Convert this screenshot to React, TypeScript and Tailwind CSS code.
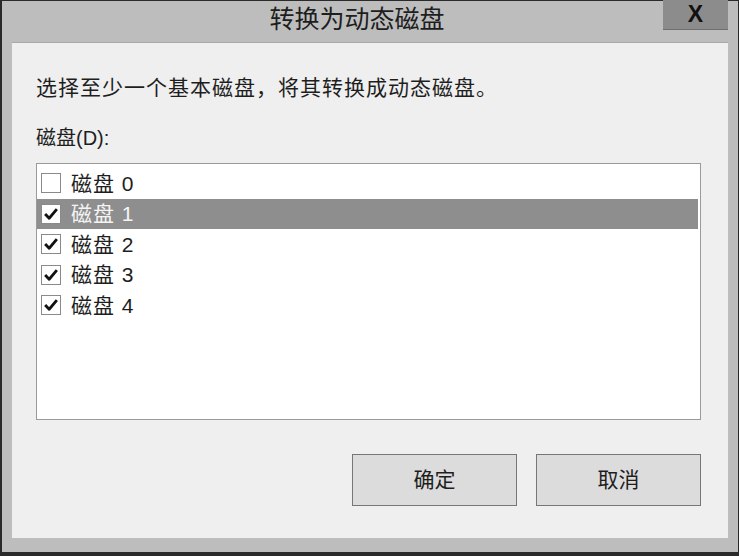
import React from "react";

const disks = [
  { name: "磁盘 0", checked: false },
  { name: "磁盘 1", checked: true },
  { name: "磁盘 2", checked: true },
  { name: "磁盘 3", checked: true },
  { name: "磁盘 4", checked: true },
];

function Check({ checked }: { checked: boolean }) {
  return (
    <div className="w-[20px] h-[20px] border border-[#8a8a8a] bg-white flex items-center justify-center shrink-0">
      {checked && (
        <svg width="16" height="16" viewBox="0 0 15 15">
          <path d="M2 7.5 L5.8 11.5 L13 3" fill="none" stroke="#111" strokeWidth="2.6" strokeLinejoin="round" />
        </svg>
      )}
    </div>
  );
}

export default function App() {
  return (
    <div
      className="w-[739px] h-[556px] bg-[#2a2a2a] pl-[2px] pr-[1px] pt-[1px] pb-[4px]"
      style={{ fontFamily: '"Liberation Sans", "Noto Sans CJK SC", sans-serif' }}
    >
      <div className="w-full h-full bg-[#bdbdbd] flex flex-col px-[10px] pb-[14px]">
        {/* title bar */}
        <div className="relative h-[41px] flex items-center justify-center shrink-0 pr-[26px]">
          <span className="text-[25px] text-[#1e1e1e] -mt-[4px]">转换为动态磁盘</span>
          <div className="absolute right-[0px] top-[-1px] w-[65px] h-[30px] bg-[#8c8c8c] border-b border-[#6e6e6e] flex items-center justify-center">
            <span className="text-[23px] font-bold text-[#111]">X</span>
          </div>
        </div>
        {/* client */}
        <div className="flex-1 bg-[#efefef] border-t border-[#a8a8a8] pl-[24px] pr-[27px] flex flex-col">
          <div className="text-[21px] text-[#1e1e1e] mt-[31px] leading-[28px] tracking-[1px]">
            选择至少一个基本磁盘，将其转换成动态磁盘。
          </div>
          <div className="text-[20px] text-[#1e1e1e] mt-[22px] leading-[28px]">磁盘(D):</div>
          <div className="mt-[11px] h-[257px] bg-white border border-[#9a9a9a] pt-[4px] pr-[2px]">
            {disks.map((d, i) => (
              <div
                key={d.name}
                className={
                  "h-[30.5px] flex items-center gap-[10px] pl-[4px] " +
                  (i === 1 ? "bg-[#8e8e8e] text-[#f4f4f4]" : "text-[#1e1e1e]")
                }
              >
                <Check checked={d.checked} />
                <span className="text-[21px] leading-none tracking-[1px]">{d.name}</span>
              </div>
            ))}
          </div>
          <div className="flex justify-end gap-[19px] mt-[34px]">
            <button className="w-[165px] h-[52px] bg-[#dcdcdc] border border-[#777] text-[21px] text-[#1e1e1e]">
              确定
            </button>
            <button className="w-[165px] h-[52px] bg-[#dcdcdc] border border-[#777] text-[21px] text-[#1e1e1e]">
              取消
            </button>
          </div>
        </div>
      </div>
    </div>
  );
}
